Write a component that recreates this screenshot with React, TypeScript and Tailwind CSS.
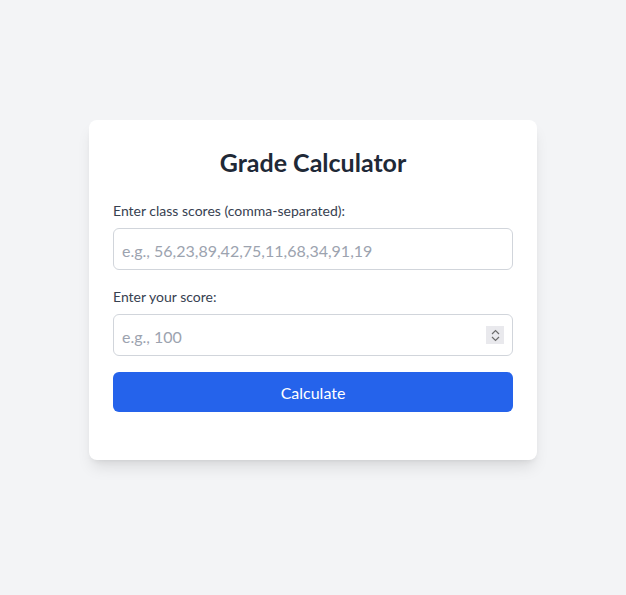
import { useState } from 'react';

function Spinner() {
  return (
    <div className="absolute right-[9px] top-1/2 -translate-y-1/2 w-[18px] h-[18px] bg-[#e9e9ed] flex flex-col items-center justify-center gap-[1px] pointer-events-none">
      <svg width="9" height="6" viewBox="0 0 9 6" fill="none" stroke="#6b6b6b" strokeWidth="1.2">
        <path d="M1 5 L4.5 1.5 L8 5" />
      </svg>
      <svg width="9" height="6" viewBox="0 0 9 6" fill="none" stroke="#6b6b6b" strokeWidth="1.2">
        <path d="M1 1 L4.5 4.5 L8 1" />
      </svg>
    </div>
  );
}

export default function App() {
  const [scores, setScores] = useState('');
  const [mine, setMine] = useState('');

  return (
    <div
      className="min-h-screen bg-[#f3f4f6] flex justify-center pt-[120px]"
      style={{ fontFamily: 'Lato, sans-serif' }}
    >
      <div className="bg-white rounded-lg shadow-lg w-[448px] h-[340px] p-6">
        <h1 className="text-[25px] leading-8 font-bold text-center text-[#1f2937] pt-[2px] mb-[22px]">
          Grade Calculator
        </h1>

        <label className="block text-sm text-[#374151] pt-[1px] mb-[7px]">Enter class scores (comma-separated):</label>
        <input
          type="text"
          value={scores}
          onChange={(e) => setScores(e.target.value)}
          placeholder="e.g., 56,23,89,42,75,11,68,34,91,19"
          className="w-full px-2 pt-[10px] pb-[6px] border border-[#d1d5db] rounded-md mb-4 placeholder:text-[#9ca3af] outline-none"
        />

        <label className="block text-sm text-[#374151] pt-[1px] mb-[7px]">Enter your score:</label>
        <div className="relative mb-4">
          <input
            type="number"
            value={mine}
            onChange={(e) => setMine(e.target.value)}
            placeholder="e.g., 100"
            className="w-full pl-2 pr-8 pt-[10px] pb-[6px] border border-[#d1d5db] rounded-md placeholder:text-[#9ca3af] outline-none [appearance:textfield] [&::-webkit-inner-spin-button]:appearance-none [&::-webkit-outer-spin-button]:appearance-none"
          />
          <Spinner />
        </div>

        <button className="w-full bg-[#2563eb] text-white pt-[9px] pb-[7px] rounded-md">Calculate</button>
      </div>
    </div>
  );
}
